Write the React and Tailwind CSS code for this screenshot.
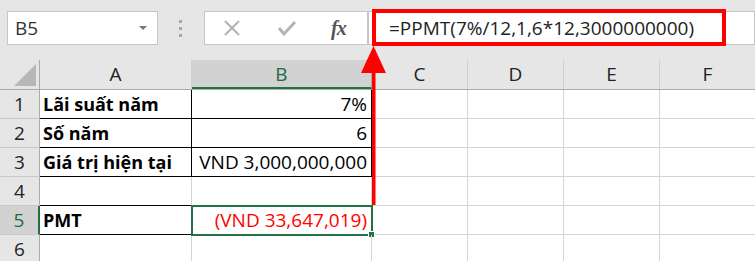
import React from 'react';

const cols = ['A', 'B', 'C', 'D', 'E', 'F'];

const rows = [
  { n: 1, a: 'Lãi suất năm', b: '7%' },
  { n: 2, a: 'Số năm', b: '6' },
  { n: 3, a: 'Giá trị hiện tại', b: 'VND 3,000,000,000' },
  { n: 4, a: '', b: '' },
  { n: 5, a: 'PMT', b: '(VND 33,647,019)' },
  { n: 6, a: '', b: '' },
];

const widths = ['w-[152px]', 'w-[180px]', 'w-[96px]', 'w-[96px]', 'w-[96px]', 'w-[96px]'];

// black table borders for A1:B3 and A5:B5
const boxed = (n) => n <= 3 || n === 5;

const App = () => {
  return (
    <div className="relative w-[755px] h-[261px] overflow-hidden bg-white font-['Open_Sans',sans-serif] text-[19px] text-black">

      {/* FORMULA BAR */}
      <div className="h-[60px] bg-[#e6e6e6] flex items-start pt-[11px]">
        <div className="ml-[7px] w-[151px] h-[34px] bg-white border border-[#c6c6c6] flex items-center justify-between pl-[7px] pr-[10px]">
          <span className="text-[#333] text-[19px]">B5</span>
          <span className="w-0 h-0 border-l-[4px] border-r-[4px] border-t-[4px] border-l-transparent border-r-transparent border-t-[#777]" />
        </div>
        <div className="ml-[21px] mt-[9px] flex flex-col gap-[4px]">
          <span className="w-[3px] h-[3px] bg-[#a8a8a8]" />
          <span className="w-[3px] h-[3px] bg-[#a8a8a8]" />
          <span className="w-[3px] h-[3px] bg-[#a8a8a8]" />
        </div>
        <div className="ml-[22px] w-[164px] h-[34px] bg-white border border-[#c6c6c6] flex items-center">
          <svg width="18" height="18" viewBox="0 0 18 18" className="ml-[18px]">
            <path d="M2 2 L16 16 M16 2 L2 16" stroke="#b4b4b4" strokeWidth="2.2" />
          </svg>
          <svg width="20" height="18" viewBox="0 0 20 18" className="ml-[36px]">
            <path d="M2 9 L7 15 L18 3" fill="none" stroke="#b4b4b4" strokeWidth="3" />
          </svg>
          <span className="ml-[34px] font-['Liberation_Serif',serif] italic font-bold text-[20px] text-[#555] tracking-[-1px]">fx</span>
        </div>
        <div className="flex-1 h-[34px] bg-white border border-[#c6c6c6] flex items-center pl-[20px]">
          <span className="text-[19px] text-[#222]">=PPMT(7%/12,1,6*12,3000000000)</span>
        </div>
      </div>

      {/* SHEET */}
      <div className="flex flex-col">
        {/* column headers */}
        <div className="flex h-[30px] bg-[#e6e6e6] border-b border-[#ababab]">
          <div className="relative w-[40px] shrink-0 border-r border-[#ababab]">
            <svg className="absolute right-[3px] bottom-[3px]" width="22" height="22" viewBox="0 0 22 22">
              <polygon points="22,0 22,22 0,22" fill="#b7b7b7" />
            </svg>
          </div>
          {cols.map((c, i) => (
            <div
              key={c}
              className={`${widths[i]} shrink-0 flex items-center justify-center border-r ${
                c === 'B'
                  ? 'bg-[#d2d2d2] border-[#ababab] text-[#1d6b3f] border-b-2 border-b-[#217346] pt-[2px]'
                  : 'border-[#d0d0d0] text-[#222]'
              }`}
            >
              {c}
            </div>
          ))}
        </div>

        {/* rows */}
        {rows.map((r) => (
          <div key={r.n} className="flex h-[29px]">
            <div
              className={`w-[40px] shrink-0 flex items-center justify-center border-b border-[#c8c8c8] ${
                r.n === 5
                  ? 'bg-[#d2d2d2] text-[#1d6b3f] border-r-2 border-r-[#217346]'
                  : 'bg-[#e6e6e6] text-[#222] border-r border-r-[#ababab]'
              }`}
            >
              {r.n}
            </div>
            <div
              className={`w-[152px] shrink-0 flex items-center pl-[3px] font-bold text-[18px] border-r border-b ${
                boxed(r.n) ? 'border-black' : 'border-[#d4d4d4]'
              } ${r.n === 4 ? 'border-b-black' : ''}`}
            >
              {r.a}
            </div>
            <div
              className={`relative w-[180px] shrink-0 flex items-center justify-end pr-[4px] border-r border-b ${
                boxed(r.n) ? 'border-black' : 'border-[#d4d4d4]'
              } ${r.n === 4 ? 'border-b-black' : ''} ${r.n === 5 ? 'text-[#ff0000]' : ''}`}
            >
              {r.b}
              {r.n === 5 && (
                <>
                  <span className="absolute -left-[1px] -top-[1px] w-[182px] h-[31px] border-2 border-[#217346]" />
                  <span className="absolute -right-[4px] -bottom-[4px] w-[7px] h-[7px] bg-[#217346] border border-white" />
                </>
              )}
            </div>
            {[0, 1, 2, 3].map((k) => (
              <div key={k} className="w-[96px] shrink-0 border-r border-b border-[#d4d4d4]" />
            ))}
          </div>
        ))}
      </div>

      {/* ANNOTATION */}
      <div className="absolute left-[372px] top-[9px] w-[354px] h-[37px] border-4 border-[#ff0000]" />
      <svg className="absolute left-0 top-0" width="755" height="261" viewBox="0 0 755 261">
        <rect x="372" y="60" width="3.5" height="145" fill="#ff0000" />
        <polygon points="373.5,46 386,73 361,73" fill="#ff0000" />
      </svg>
    </div>
  );
};

export default App;
